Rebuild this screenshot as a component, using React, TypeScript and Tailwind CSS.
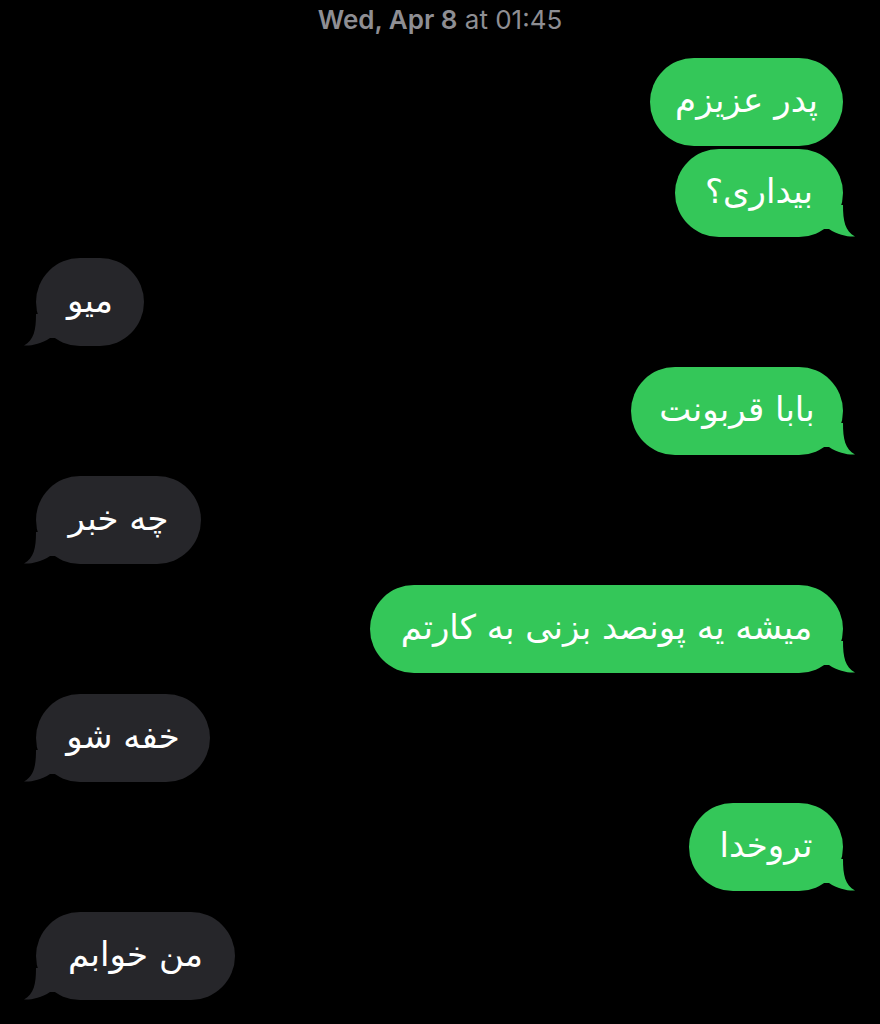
type Msg = { id: number; text: string; mine: boolean; tail: boolean; gap: 'tight' | 'group' | 'none'; w: string };

const messages: Msg[] = [
  { id: 1, text: 'پدر عزیزم', mine: true, tail: false, gap: 'none', w: 'w-[193px]' },
  { id: 2, text: 'بیداری؟', mine: true, tail: true, gap: 'tight', w: 'w-[168px]' },
  { id: 3, text: 'میو', mine: false, tail: true, gap: 'group', w: 'w-[108px]' },
  { id: 4, text: 'بابا قربونت', mine: true, tail: true, gap: 'group', w: 'w-[212px]' },
  { id: 5, text: 'چه خبر', mine: false, tail: true, gap: 'group', w: 'w-[165px]' },
  { id: 6, text: 'میشه یه پونصد بزنی به کارتم', mine: true, tail: true, gap: 'group', w: 'w-[473px]' },
  { id: 7, text: 'خفه شو', mine: false, tail: true, gap: 'group', w: 'w-[174px]' },
  { id: 8, text: 'تروخدا', mine: true, tail: true, gap: 'group', w: 'w-[154px]' },
  { id: 9, text: 'من خوابم', mine: false, tail: true, gap: 'group', w: 'w-[199px]' },
];

// iMessage-style tail, drawn for the right side; mirrored for incoming bubbles
function Tail({ mine }: { mine: boolean }) {
  return (
    <svg
      width="32"
      height="32"
      viewBox="0 0 32 32"
      className={`absolute bottom-0 ${mine ? 'right-[-12px]' : 'left-[-12px] -scale-x-100'}`}
    >
      <path
        d="M0 0 L20 0 C20 16 22 26 32 31.5 C25 32 15 30 6 24 L0 24 Z"
        className={mine ? 'fill-[#34c759]' : 'fill-[#26262a]'}
      />
    </svg>
  );
}

function Bubble({ msg }: { msg: Msg }) {
  const mt = msg.gap === 'tight' ? 'mt-[3px]' : msg.gap === 'group' ? 'mt-[21px]' : 'mt-0';
  return (
    <div className={`flex ${msg.mine ? 'justify-end pr-[37px]' : 'justify-start pl-[36px]'} ${mt}`}>
      <div
        dir="rtl"
        className={`relative ${msg.w} h-[88px] flex items-center justify-center rounded-[44px] text-white text-[34px] leading-none whitespace-nowrap ${
          msg.mine ? 'bg-[#34c759]' : 'bg-[#26262a]'
        }`}
        style={{ fontFamily: '"DejaVu Sans", sans-serif' }}
      >
        {msg.tail && <Tail mine={msg.mine} />}
        <span className="relative pb-[4px]">{msg.text}</span>
      </div>
    </div>
  );
}

export default function App() {
  return (
    <div className="w-[880px] h-[1024px] bg-black overflow-hidden">
      <div
        className="h-[58px] pt-[6px] text-center text-[26px] text-[#8e8e93] leading-[28px]"
        style={{ fontFamily: 'Inter, "Liberation Sans", sans-serif' }}
      >
        <span className="font-semibold">Wed, Apr 8</span> <span>at 01:45</span>
      </div>
      {messages.map((m) => (
        <Bubble key={m.id} msg={m} />
      ))}
    </div>
  );
}
